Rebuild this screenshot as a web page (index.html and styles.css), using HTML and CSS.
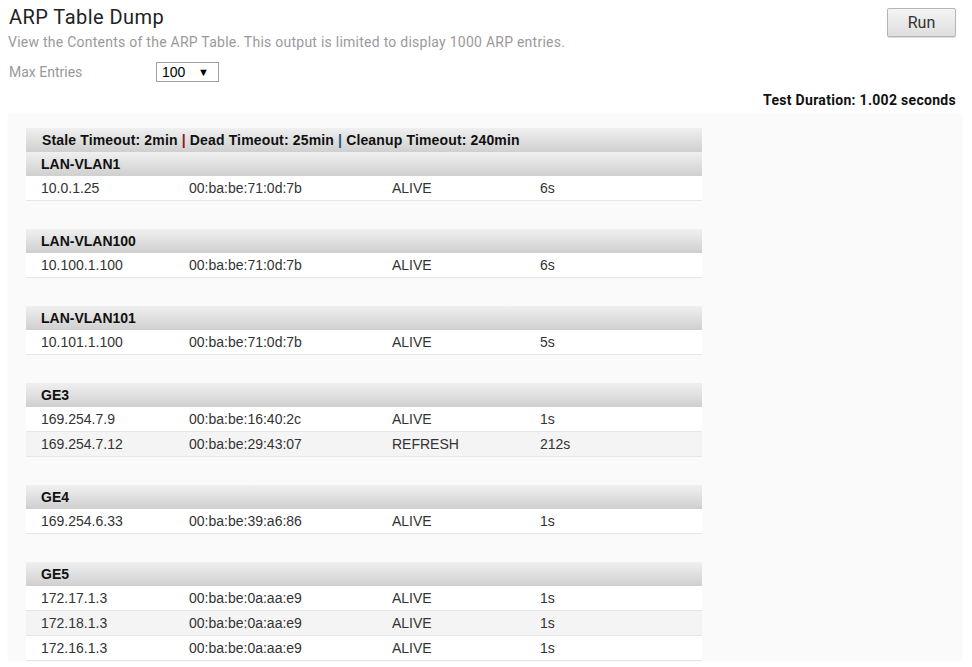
FILE: index.html
```html
<!DOCTYPE html>
<html>
<head>
<meta charset="utf-8">
<link rel="stylesheet" href="styles.css">
</head>
<body>
<div class="page">
  <div class="top">
    <div class="intro">
      <h1 class="title">ARP Table Dump</h1>
      <p class="subtitle">View the Contents of the ARP Table. This output is limited to display 1000 ARP entries.</p>
      <div class="field">
        <span class="label">Max Entries</span>
        <div class="select"><span>100</span><span class="arrow">&#9660;</span></div>
      </div>
    </div>
    <button class="run">Run</button>
  </div>
  <div class="duration">Test Duration: 1.002 seconds</div>
  <div class="panel">
    <div class="table">
      <div class="summary">Stale Timeout: 2min <span class="sep red">|</span> Dead Timeout: 25min <span class="sep blue">|</span> Cleanup Timeout: 240min</div>

      <div class="group">
        <div class="ghead">LAN-VLAN1</div>
        <div class="row"><span>10.0.1.25</span><span>00:ba:be:71:0d:7b</span><span>ALIVE</span><span>6s</span></div>
      </div>

      <div class="group">
        <div class="ghead">LAN-VLAN100</div>
        <div class="row"><span>10.100.1.100</span><span>00:ba:be:71:0d:7b</span><span>ALIVE</span><span>6s</span></div>
      </div>

      <div class="group">
        <div class="ghead">LAN-VLAN101</div>
        <div class="row"><span>10.101.1.100</span><span>00:ba:be:71:0d:7b</span><span>ALIVE</span><span>5s</span></div>
      </div>

      <div class="group">
        <div class="ghead">GE3</div>
        <div class="row"><span>169.254.7.9</span><span>00:ba:be:16:40:2c</span><span>ALIVE</span><span>1s</span></div>
        <div class="row"><span>169.254.7.12</span><span>00:ba:be:29:43:07</span><span>REFRESH</span><span>212s</span></div>
      </div>

      <div class="group">
        <div class="ghead">GE4</div>
        <div class="row"><span>169.254.6.33</span><span>00:ba:be:39:a6:86</span><span>ALIVE</span><span>1s</span></div>
      </div>

      <div class="group last">
        <div class="ghead">GE5</div>
        <div class="row"><span>172.17.1.3</span><span>00:ba:be:0a:aa:e9</span><span>ALIVE</span><span>1s</span></div>
        <div class="row"><span>172.18.1.3</span><span>00:ba:be:0a:aa:e9</span><span>ALIVE</span><span>1s</span></div>
        <div class="row"><span>172.16.1.3</span><span>00:ba:be:0a:aa:e9</span><span>ALIVE</span><span>1s</span></div>
      </div>
    </div>
  </div>
</div>
</body>
</html>
```
FILE: styles.css
```css
html, body {
  margin: 0;
  padding: 0;
  background: #ffffff;
  font-family: Roboto, "Liberation Sans", sans-serif;
  color: #222;
  overflow: hidden;
}
.page {
  padding: 0 16px 0 8px;
}
.top {
  display: flex;
  justify-content: space-between;
  align-items: flex-start;
}
.title {
  margin: 0;
  padding-top: 6px;
  font-size: 20px;
  line-height: 23px;
  font-weight: 400;
  color: #222;
  padding-left: 1px;
  letter-spacing: 0.45px;
}
.subtitle {
  margin: 5px 0 0 0;
  font-size: 14px;
  line-height: 17px;
  color: #9a9a9a;
  letter-spacing: 0.25px;
}
.field {
  display: flex;
  align-items: center;
  margin-top: 11px;
}
.label {
  width: 147px;
  padding-left: 1px;
  font-size: 14px;
  color: #999;
}
.select {
  height: 18px;
  border: 1px solid #a0a0a0;
  display: flex;
  align-items: center;
  justify-content: space-between;
  box-sizing: content-box;
  font-family: "Liberation Sans", Arial, sans-serif;
  font-size: 14px;
  color: #000;
  padding: 0 0 0 5px;
  width: 56px;
}
.select .arrow {
  font-size: 11px;
  margin-right: 9px;
}
.run {
  margin-top: 8px;
  width: 69px;
  height: 29px;
  border: 1px solid #b5b5b5;
  border-radius: 2px;
  background: linear-gradient(#f4f4f4, #dedede);
  font-family: Roboto, sans-serif;
  font-size: 16px;
  color: #333;
  padding: 0;
  box-shadow: 0 1px 1px rgba(0,0,0,0.15);
}
.duration {
  text-align: right;
  font-size: 14px;
  font-weight: 700;
  color: #111;
  margin-top: 10px;
  line-height: 17px;
  letter-spacing: 0.3px;
}
.panel {
  margin-top: 4px;
  margin-right: -6px;
  background: #fafafa;
  border-radius: 4px;
  padding: 15px 0 0 18px;
  box-shadow: 0 0 2px rgba(0,0,0,0.04);
}
.table {
  width: 676px;
  font-family: "Liberation Sans", Arial, sans-serif;
}
.summary, .ghead {
  height: 24px;
  line-height: 24px;
  background: linear-gradient(#f0f0f0, #cfcfcf);
  font-weight: 700;
  font-size: 14px;
  color: #111;
  padding-left: 15px;
  box-sizing: border-box;
}
.summary {
  padding-left: 16px;
  letter-spacing: 0.15px;
}
.sep.red { color: #8b1a1a; }
.sep.blue { color: #1a5a8b; }
.group {
  margin-bottom: 28px;
}
.group.last {
  margin-bottom: 12px;
}
.row {
  display: grid;
  grid-template-columns: 148px 203px 148px 1fr;
  height: 25px;
  line-height: 24px;
  background: #ffffff;
  border-bottom: 1px solid #e6e6e6;
  box-sizing: border-box;
  font-size: 14px;
  color: #333;
  padding-left: 15px;
}
.row:nth-child(odd) {
  background: #f4f4f4;
}
```
